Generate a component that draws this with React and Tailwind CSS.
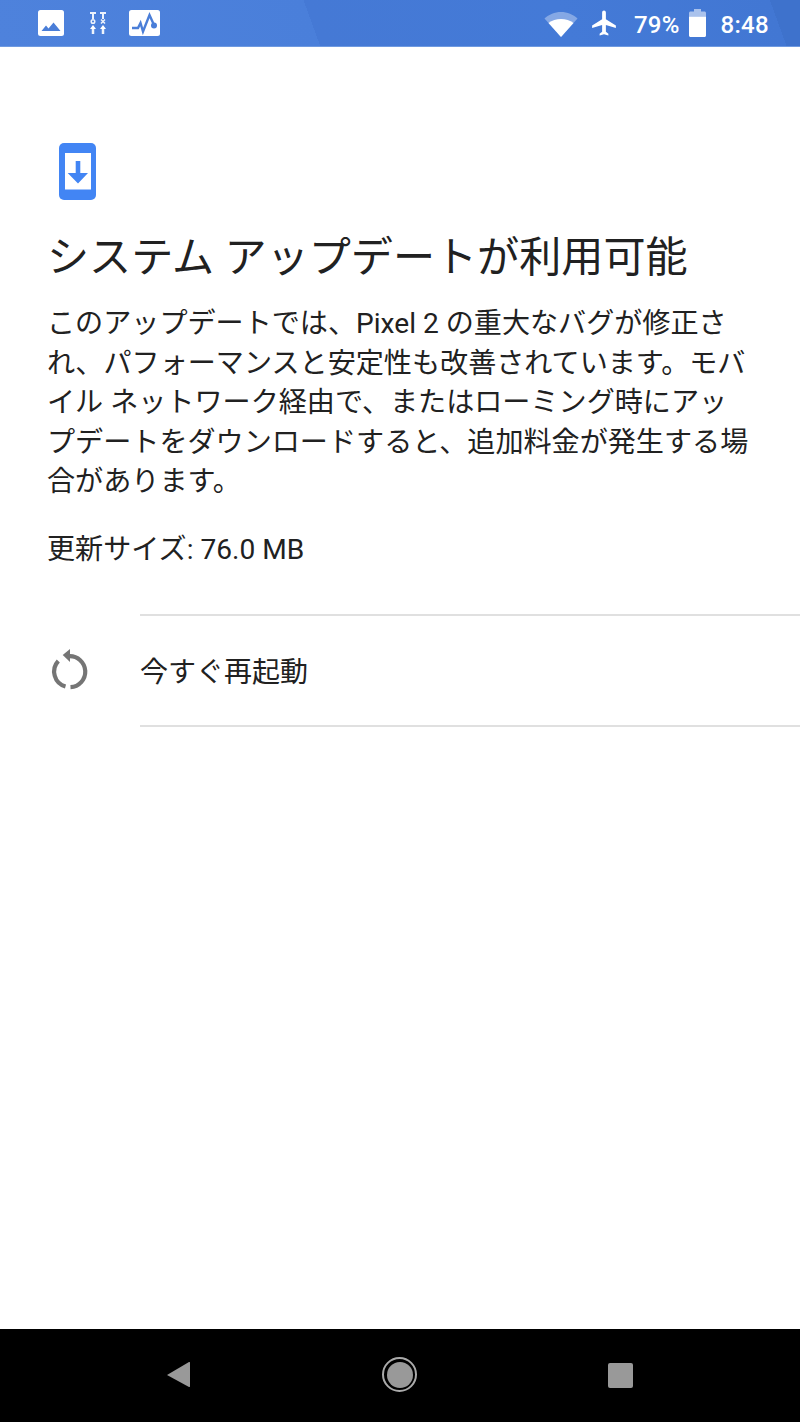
export default function App() {
  const font = { fontFamily: 'Roboto, "Noto Sans CJK JP", sans-serif' };
  return (
    <div className="w-[800px] h-[1422px] flex flex-col bg-white overflow-hidden" style={font}>
      <div className="h-[47px] shrink-0 flex items-center justify-between pl-[38px] pr-[31px] bg-[linear-gradient(70deg,#4e82dc_0%,#4a7fda_39.2%,#4579d5_39.2%,#447ad7_70%,#4277d3_96.3%,#3e72cc_96.3%)] border-b border-[#6f9ae0]">
        <div className="flex items-center">
          <svg width="26" height="26" viewBox="0 0 26 26">
            <rect width="26" height="26" rx="2.5" fill="#fff" />
            <path d="M3.500 21 L8 15.500 L10.500 18.500 L15.500 12.500 L22.500 21 Z" fill="#4a7ed8" />
          </svg>
          <svg width="16" height="22" viewBox="0 0 16 22" className="ml-[26px]" fill="none" stroke="#fff" strokeOpacity="0.9" strokeWidth="2">
            <path d="M0 1H6M3 1V7M10 1H16M13 1V7" />
            <circle cx="3" cy="9.500" r="1.800" strokeWidth="1.500" />
            <path d="M11 7.500L15 11.500M15 7.500L11 11.500" strokeWidth="1.500" />
            <path d="M3 15V22M13 15V22" strokeWidth="2.500" />
            <path d="M0 17L3 13L6 17ZM10 17L13 13L16 17Z" fill="#fff" stroke="none" />
          </svg>
          <svg width="31" height="26" viewBox="0 0 31 26" className="ml-[23px]">
            <rect width="31" height="26" rx="2.5" fill="#fff" />
            <path d="M3 18H9L11.500 13L14 21.500L20.500 5L25 15" fill="none" stroke="#4a7ed8" strokeWidth="2.400" />
            <circle cx="25" cy="15.500" r="3" fill="#4a7ed8" />
          </svg>
        </div>
        <div className="flex items-center text-white">
          <svg width="34" height="27" viewBox="0 0 34 27">
            <path d="M17 27L0.500 8.500C5 4.500 10.500 2 17 2S29 4.500 33.500 8.500Z" fill="#fff" fillOpacity="0.35" />
            <path d="M17 27L4.500 13C8 10.500 12.300 9 17 9S26 10.500 29.500 13Z" fill="#fff" />
          </svg>
          <svg width="30" height="30" viewBox="0 0 24 24" className="ml-[11px]">
            <path d="M21 16v-2l-8-5V3.500c0-.83-.67-1.500-1.500-1.500S10 2.670 10 3.500V9l-8 5v2l8-2.500V19l-2 1.500V22l3.500-1 3.500 1v-1.500L13 19v-5.500l8 2.500z" fill="#fff" transform="translate(0.500 0)" />
          </svg>
          <span className="ml-[15px] mt-[3px] text-[24px] font-medium leading-none tracking-[0.2px]">79%</span>
          <svg width="17" height="28" viewBox="0 0 17 28" className="ml-[9px]">
            <path d="M5 0H12V2.500H15.500C16.300 2.500 17 3.200 17 4V7.500H0V4C0 3.200 .7 2.500 1.500 2.500H5Z" fill="#fff" fillOpacity="0.55" />
            <path d="M0 7.500H17V26.500C17 27.300 16.300 28 15.500 28H1.500C.7 28 0 27.300 0 26.500Z" fill="#fff" />
          </svg>
          <span className="ml-[15px] mt-[3px] text-[24px] font-medium leading-none tracking-[0.3px]">8:48</span>
        </div>
      </div>

      <div className="flex-1 flex flex-col">
        <div className="pl-[47px] pr-[24px] pt-[96px]">
          <svg width="37" height="57" viewBox="0 0 37 57" className="ml-[12px] block">
            <rect width="37" height="57" rx="5" fill="#4285f4" />
            <rect x="6" y="10" width="26" height="36.500" fill="#fff" />
            <path d="M16.700 18H21.300V30H29L19 40.500L8.700 30H16.700Z" fill="#4285f4" />
          </svg>
          <h1 className="mt-[31px] text-[42.100px] leading-[54px] font-normal text-[#212121] whitespace-nowrap">システム アップデートが利用可能</h1>
          <div className="mt-[19px] text-[28.100px] leading-[39.500px] text-[#212121] whitespace-nowrap">
            <div>このアップデートでは、Pixel 2 の重大なバグが修正さ</div>
            <div>れ、パフォーマンスと安定性も改善されています。モバ</div>
            <div>イル ネットワーク経由で、またはローミング時にアッ</div>
            <div>プデートをダウンロードすると、追加料金が発生する場</div>
            <div>合があります。</div>
          </div>
          <div className="mt-[28px] text-[28.100px] leading-[40px] text-[#212121] whitespace-nowrap">更新サイズ: 76.0 MB</div>
        </div>
        <div className="mt-[44px] ml-[140px] h-[113px] pt-[5px] border-y-2 border-[#e0e0e0] flex items-center relative">
          <svg width="40" height="44" viewBox="0 0 40 44" className="absolute left-[-90px] top-[31px]" fill="none">
            <path d="M8.300 14A15.500 15.500 0 0 0 15.500 39.500" stroke="#757575" strokeWidth="4.200" />
            <path d="M19 9.200A15.500 15.500 0 0 1 20.500 40.200" stroke="#757575" strokeWidth="4.200" />
            <path d="M12.700 8L20 2V15Z" fill="#757575" />
          </svg>
          <span className="text-[28px] text-[#212121] leading-none">今すぐ再起動</span>
        </div>
      </div>

      <div className="h-[93px] shrink-0 bg-black relative">
        <svg width="25" height="27" viewBox="0 0 25 27" className="absolute left-[166px] top-[32px]">
          <path d="M23 1L1 14L23 26C24 26 24 25.500 24 25V2C24 1.500 24 1 23 1Z" fill="#999" />
        </svg>
        <div className="absolute left-[382px] top-[28px] w-[35px] h-[35px] rounded-full border-2 border-[#aaa] flex items-center justify-center">
          <div className="w-[26px] h-[26px] rounded-full bg-[#999]" />
        </div>
        <div className="absolute left-[608px] top-[34px] w-[25px] h-[25px] rounded-[2px] bg-[#999]" />
      </div>
    </div>
  );
}
